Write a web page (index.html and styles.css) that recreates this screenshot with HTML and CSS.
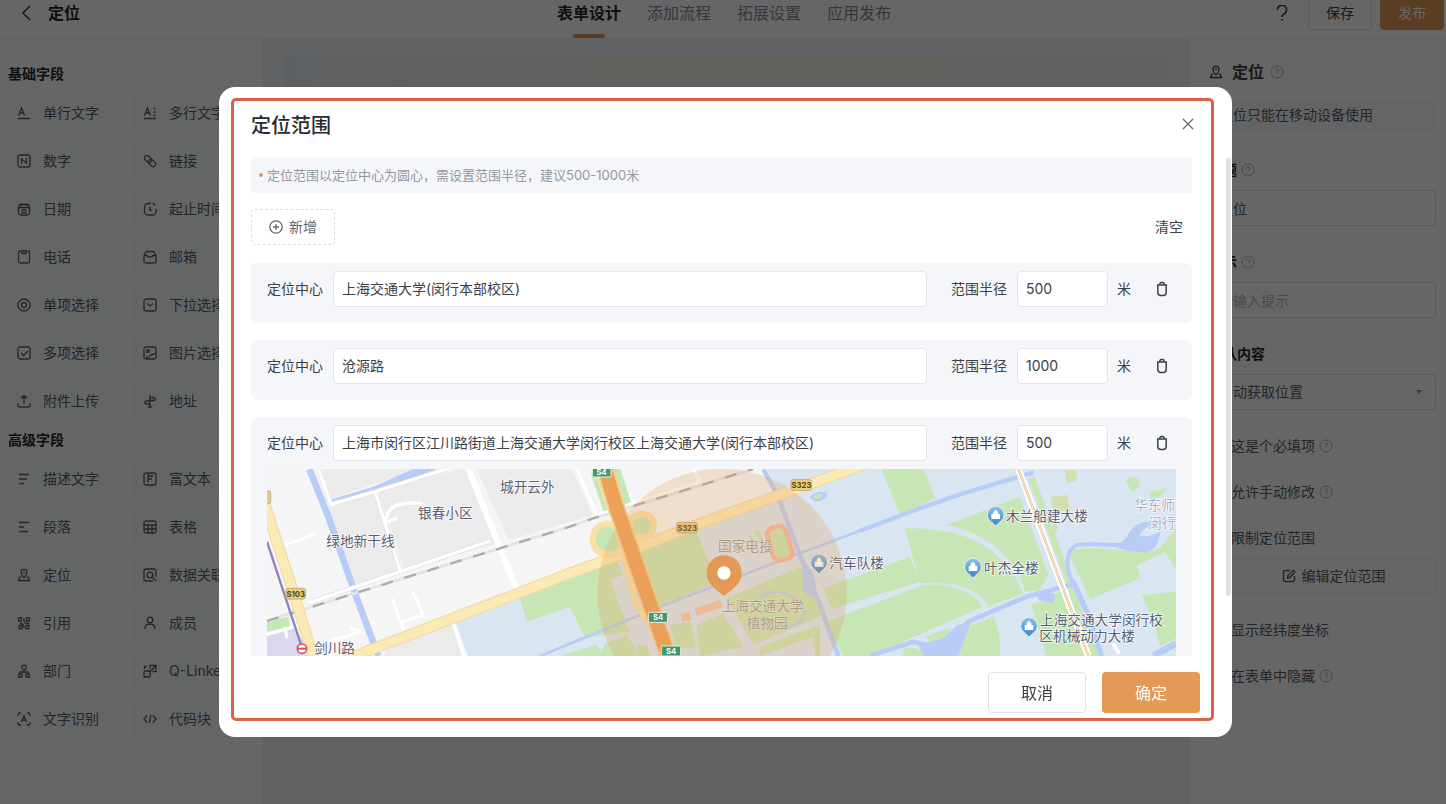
FILE: index.html
```html
<!DOCTYPE html>
<html lang="zh-CN">
<head>
  <meta charset="utf-8">
  <title>表单设计 - 定位</title>
  <meta name="viewport" content="width=device-width, initial-scale=1">
  <link rel="stylesheet" href="styles.css">
</head>
<body>
<!-- shared icons -->
<svg class="icon-defs" aria-hidden="true">
  <symbol id="i-help" viewBox="0 0 14 14"><circle cx="7" cy="7" r="6"/><path d="M5.3 5.6a1.7 1.7 0 1 1 2.5 1.5c-.6.3-.8.6-.8 1.1M7 9.7v.6"/></symbol>
  <symbol id="i-trash" viewBox="0 0 14 16"><path d="M2 4h10M4.500 4l.6-1.700c.2-.5.5-.8 1.100-.8h1.600c.6 0 .9.3 1.100.8L9.500 4M2.800 4v7.500a3 3 0 0 0 3 3h2.400a3 3 0 0 0 3-3V4"/></symbol>
  <symbol id="i-locate" viewBox="0 0 14 14"><path d="M7 9.800C5 8 4 6.300 4 4.300a3 3 0 0 1 6 0C10 6.300 9 8 7 9.800zM7 3.500v2M4.300 8.800H3.200L1.500 12.500h11l-1.700-3.700H9.700"/></symbol>
</svg>

<div class="page">
  <header class="topbar">
    <div class="topbar-left">
      <a href="#" class="back" aria-label="返回"><svg viewBox="0 0 12 16"><path d="M10 1L3 8l7 7"/></svg></a>
      <span class="topbar-title">定位</span>
    </div>
    <nav class="tabs">
      <a href="#" class="tab active">表单设计</a>
      <a href="#" class="tab">添加流程</a>
      <a href="#" class="tab">拓展设置</a>
      <a href="#" class="tab">应用发布</a>
    </nav>
    <div class="topbar-right">
      <button class="help-btn" aria-label="帮助"><svg viewBox="0 0 12 16"><path d="M1.500 4.800a4.500 4.500 0 1 1 6.700 3.900C6.600 9.600 6 10.300 6 12M6 14v1.500"/></svg></button>
      <button class="btn-save">保存</button>
      <button class="btn-publish">发布</button>
    </div>
  </header>

  <div class="workspace">
    <aside class="sidebar">
      <h2 class="group-title">基础字段</h2>
      <div class="field-grid">
        <button class="field-item"><svg viewBox="0 0 14 14"><path d="M1.500 9.500l3-7.500 3 7.500M2.500 7h4M1 12.500h12"/></svg>单行文字</button>
        <button class="field-item"><svg viewBox="0 0 14 14"><path d="M1.500 9.500l3-7.500 3 7.500M2.500 7h4M1 12.500h12M10.500 2.500h2M10.500 6h2M10.500 9.500h2"/></svg>多行文字</button>
        <button class="field-item"><svg viewBox="0 0 14 14"><rect x="1" y="1" width="12" height="12" rx="2"/><path d="M4.500 10V5l5 4V4"/></svg>数字</button>
        <button class="field-item"><svg viewBox="0 0 14 14"><rect x="1" y="2.500" width="8" height="5" rx="2.500" transform="rotate(45 5 5)"/><rect x="5" y="6.500" width="8" height="5" rx="2.500" transform="rotate(45 9 9)"/></svg>链接</button>
        <button class="field-item"><svg viewBox="0 0 14 14"><rect x="1.500" y="2.500" width="11" height="10.500" rx="2.500"/><path d="M4.500 1v3M9.500 1v3M1.500 5.500h11M4.500 8h5M4.500 10.500h5"/></svg>日期</button>
        <button class="field-item"><svg viewBox="0 0 14 14"><path d="M8 1.500H5a3.500 3.500 0 0 0-3.500 3.500v4.500A3.500 3.500 0 0 0 5 13h4.500A3.500 3.500 0 0 0 13 9.500V7M7 4.500V8h2M10 1l2 2.500"/></svg>起止时间</button>
        <button class="field-item"><svg viewBox="0 0 14 14"><rect x="1.500" y="1" width="11" height="12" rx="2"/><path d="M5 1.500v2h4v-2"/></svg>电话</button>
        <button class="field-item"><svg viewBox="0 0 14 14"><path d="M1 5.500l2.500-4h7l2.500 4V11a2 2 0 0 1-2 2H3a2 2 0 0 1-2-2zM1 5.500h3c.5 2 5.500 2 6 0h3"/></svg>邮箱</button>
        <button class="field-item"><svg viewBox="0 0 14 14"><circle cx="7" cy="7" r="6"/><circle cx="7" cy="7" r="2.500"/></svg>单项选择</button>
        <button class="field-item"><svg viewBox="0 0 14 14"><rect x="1" y="1" width="12" height="12" rx="2"/><path d="M4 5.500l3 2.500 3-2.500"/></svg>下拉选择</button>
        <button class="field-item"><svg viewBox="0 0 14 14"><rect x="1" y="1" width="12" height="12" rx="2"/><path d="M4 7l2.500 2.500L11 5"/></svg>多项选择</button>
        <button class="field-item"><svg viewBox="0 0 14 14"><rect x="1" y="1" width="12" height="12" rx="2"/><path d="M4 4h2v2H4zM3 11.500c3 0 5-4 9.500-3.500"/></svg>图片选择</button>
        <button class="field-item"><svg viewBox="0 0 14 14"><path d="M7 10V1.500M4 4.500l3-3 3 3M1 9v2.500c0 .8.500 1.500 1.500 1.500h9c1 0 1.500-.7 1.500-1.500V9"/></svg>附件上传</button>
        <button class="field-item"><svg viewBox="0 0 14 14"><path d="M7 1v12M5 13h4M7 3.500h4l1.500 1.500L11 6.500H7M7 7H3L1.500 8.500 3 10h4z"/></svg>地址</button>
      </div>

      <h2 class="group-title">高级字段</h2>
      <div class="field-grid">
        <button class="field-item"><svg viewBox="0 0 14 14"><path d="M2 2.500h10M2 7h8M2 11.500h5"/></svg>描述文字</button>
        <button class="field-item"><svg viewBox="0 0 14 14"><rect x="1" y="1" width="12" height="12" rx="2"/><path d="M5 10.500V4h5M5 7h4M5 1v3"/></svg>富文本</button>
        <button class="field-item"><svg viewBox="0 0 14 14"><path d="M2 2.500h10M2 7h5M2 11.500h9"/></svg>段落</button>
        <button class="field-item"><svg viewBox="0 0 14 14"><rect x="1" y="1" width="12" height="12" rx="2"/><path d="M1 5h12M1 9h12M5 5v8M9 5v8"/></svg>表格</button>
        <button class="field-item"><svg><use href="#i-locate"/></svg>定位</button>
        <button class="field-item"><svg viewBox="0 0 14 14"><path d="M13 9V3a2 2 0 0 0-2-2H3a2 2 0 0 0-2 2v8c0 1.100.9 2 2 2h7M9 9l4 4"/><circle cx="7" cy="7" r="2.800"/></svg>数据关联</button>
        <button class="field-item"><svg viewBox="0 0 14 14"><path d="M1.500 2h3v3h-3zM2 12.500V9.500h3v3zM7 12c0-4-2-4.500-4-4.500M12.500 2h-3v3h3zM9 9.500h3v3H9zM7 2v3c0 2 2 2.500 5 2.500"/></svg>引用</button>
        <button class="field-item"><svg viewBox="0 0 14 14"><circle cx="7" cy="4" r="2.800"/><path d="M2 13c0-3.500 2-5 5-5s5 1.500 5 5"/></svg>成员</button>
        <button class="field-item"><svg viewBox="0 0 14 14"><circle cx="7" cy="3.500" r="2.300"/><path d="M7 6v2M3 10V8h8v2M1.500 10h3.500v3H1.500zM9 10h3.500v3H9z"/></svg>部门</button>
        <button class="field-item"><svg viewBox="0 0 14 14"><rect x="1" y="7" width="6" height="6" rx="1"/><path d="M7 5V1.500h6v6H9.500M6.500 8l6-6M1.500 5V2.500H4"/></svg>Q-Linker</button>
        <button class="field-item"><svg viewBox="0 0 14 14"><path d="M1 4V2.500C1 1.500 1.500 1 2.500 1H4M10 1h1.500c1 0 1.500.5 1.500 1.500V4M13 10v1.500c0 1-.5 1.500-1.500 1.500H10M4 13H2.500c-1 0-1.500-.5-1.500-1.500V10M4.500 10L7 4l2.500 6M5.300 8.200h3.400"/></svg>文字识别</button>
        <button class="field-item"><svg viewBox="0 0 14 14"><path d="M4 3.500L1 7l3 3.500M10 3.500L13 7l-3 3.500M8 3L6 11"/></svg>代码块</button>
      </div>
    </aside>

    <main class="canvas">
      <div class="canvas-banner"></div>
    </main>

    <aside class="props">
      <div class="props-title"><svg class="ico"><use href="#i-locate"/></svg><strong>定位</strong><svg class="ico-help"><use href="#i-help"/></svg></div>
      <p class="props-notice">定位只能在移动设备使用</p>

      <div class="prop">
        <label for="p-title">标题 <svg class="ico-help"><use href="#i-help"/></svg></label>
        <input id="p-title" type="text" value="定位">
      </div>
      <div class="prop">
        <label for="p-hint">提示 <svg class="ico-help"><use href="#i-help"/></svg></label>
        <input id="p-hint" type="text" placeholder="请输入提示">
      </div>
      <div class="prop prop-select">
        <label for="p-default">默认内容</label>
        <select id="p-default"><option>自动获取位置</option></select>
      </div>

      <label class="check"><input type="checkbox">这是个必填项 <svg class="ico-help"><use href="#i-help"/></svg></label>
      <label class="check"><input type="checkbox">允许手动修改 <svg class="ico-help"><use href="#i-help"/></svg></label>
      <label class="check"><input type="checkbox" checked>限制定位范围</label>
      <button class="btn-edit-range"><svg viewBox="0 0 14 14"><path d="M8 1.500H3.500a2 2 0 0 0-2 2v7c0 1.100.9 2 2 2h7a2 2 0 0 0 2-2V7M5.500 9l.4-2.400L11.300 1.200l1.700 1.700L7.800 8.500z"/></svg>编辑定位范围</button>
      <label class="check"><input type="checkbox">显示经纬度坐标</label>
      <label class="check"><input type="checkbox">在表单中隐藏 <svg class="ico-help"><use href="#i-help"/></svg></label>
    </aside>
  </div>
</div>

<div class="mask">
  <section class="modal" role="dialog" aria-labelledby="modal-title">
    <header class="modal-header">
      <h1 id="modal-title">定位范围</h1>
      <button class="modal-close" aria-label="关闭"><svg viewBox="0 0 12 12"><path d="M1 1l10 10M11 1L1 11"/></svg></button>
    </header>

    <div class="modal-body">
      <p class="hint">定位范围以定位中心为圆心，需设置范围半径，建议500-1000米</p>

      <div class="toolbar">
        <button class="btn-add"><svg viewBox="0 0 14 14"><circle cx="7" cy="7" r="6.200"/><path d="M7 4v6M4 7h6"/></svg>新增</button>
        <button class="btn-clear">清空</button>
      </div>

      <div class="range-card">
        <div class="range-row">
          <label for="c1">定位中心</label>
          <input id="c1" class="center-input" type="text" value="上海交通大学(闵行本部校区)">
          <label for="r1">范围半径</label>
          <input id="r1" class="radius-input" type="text" value="500">
          <span class="unit">米</span>
          <button class="btn-del" aria-label="删除"><svg><use href="#i-trash"/></svg></button>
        </div>
      </div>

      <div class="range-card">
        <div class="range-row">
          <label for="c2">定位中心</label>
          <input id="c2" class="center-input" type="text" value="沧源路">
          <label for="r2">范围半径</label>
          <input id="r2" class="radius-input" type="text" value="1000">
          <span class="unit">米</span>
          <button class="btn-del" aria-label="删除"><svg><use href="#i-trash"/></svg></button>
        </div>
      </div>

      <div class="range-card">
        <div class="range-row">
          <label for="c3">定位中心</label>
          <input id="c3" class="center-input" type="text" value="上海市闵行区江川路街道上海交通大学闵行校区上海交通大学(闵行本部校区)">
          <label for="r3">范围半径</label>
          <input id="r3" class="radius-input" type="text" value="500">
          <span class="unit">米</span>
          <button class="btn-del" aria-label="删除"><svg><use href="#i-trash"/></svg></button>
        </div>

        <svg class="map" viewBox="21 12 2727 561" preserveAspectRatio="xMidYMid slice">
          <defs>
            <linearGradient id="poi-fill" x1="0" y1="0" x2="0" y2="1">
              <stop offset="0" stop-color="#8cc0ea"/>
              <stop offset="1" stop-color="#3f84cc"/>
            </linearGradient>
          </defs>
          <rect x="0" y="0" width="2800" height="600" fill="#f5f5f5"/>
          <!-- city blocks -->
          <g fill="#ebebec">
            <path d="M190 130L340 90L420 315L280 365z"/>
            <path d="M355 82L600 12L625 12L715 235L432 308z"/>
            <path d="M185 12H480L215 100z"/>
            <path d="M650 12H935L1000 150L745 225z"/>
            <path d="M390 525L575 470L610 573H370z"/>
          </g>
          <!-- campus -->
          <path fill="#d9e5f0" d="M580 465L930 328L1280 190L1560 90L1520 12H2748V573H625z"/>
          <path fill="#dcd6ee" d="M0 520L100 485L160 573H0z"/>
          <!-- green areas -->
          <g fill="#c7e6b5">
            <path d="M0 475L85 455L90 485L0 505z"/>
            <path d="M780 400L1070 285L1090 330L1050 345L1110 500L975 518L930 425L800 470z"/>
            <path d="M1130 250L1310 200L1370 350L1200 425z"/>
            <path d="M1040 535L1100 510L1140 573H1010zM1130 540l30 0 10 33h-35z"/>
            <path d="M1400 400L1620 305L1690 450L1480 540zM1310 480L1390 445L1450 545L1330 573H1320z"/>
            <path d="M1230 480l60-10 20 80h-60zM1500 545L1680 480V573H1665L1660 515L1500 573z"/>
            <path d="M900 573L1010 540L1030 573z"/>
            <path d="M1690 370L1950 275L1980 350L1715 432zM1700 470L1990 360C2060 355 2130 370 2168 425L1830 573H1750z"/>
            <path d="M1865 12H1990L2025 100L1920 150zM2060 180L2280 95L2365 330L2340 375L2295 380C2270 290 2200 210 2060 180z"/>
            <path d="M1935 190C2030 190 2100 200 2170 240C2240 290 2265 330 2290 385L2185 425C2160 375 2090 345 1980 355z"/>
            <path d="M2000 515C2030 500 2060 490 2075 492C2070 520 2045 535 2010 530zM1930 552C1960 540 1990 560 2010 573H1930z"/>
            <path d="M2110 490L2200 455C2220 490 2220 530 2220 573H2085z"/>
            <path d="M2315 420L2400 380L2450 395L2520 573H2360zM2305 38L2325 38L2455 400L2435 400z"/>
            <path d="M2425 260C2500 230 2650 280 2700 250L2748 190V310L2715 263L2630 300L2640 340L2490 403z"/>
            <path d="M2645 390L2748 380V520L2700 543L2685 480z"/>
            <path d="M2597 48C2610 30 2640 35 2638 55C2635 75 2620 85 2615 78zM2670 80L2722 70L2700 95L2672 105z"/>
          </g>
          <path fill="#d3dfb0" d="M2415 15h35v30l-20 8h-10zM2372 95l50-5 8 45-50 8zM2375 165l20 20-10 20z"/>
          <!-- water -->
          <g fill="none" stroke="#b8ccf8" stroke-linejoin="round">
            <path stroke-width="20" d="M148 12L205 155L285 385L355 573"/>
            <path stroke-width="14" d="M1510 12L1552 90L1620 270L1680 420L1735 573"/>
            <path stroke-width="8" d="M840 573L1200 425L1620 265L1800 197L1980 130"/>
            <path stroke-width="13" d="M1800 197L1980 130L2100 88L2320 22"/>
            <path stroke-width="14" d="M1830 573L1960 530L2020 545L2090 525L2125 470L2300 395L2440 358"/>
            <path stroke-width="16" d="M2440 350L2480 440L2525 573"/>
            <path stroke-width="12" d="M2440 355C2420 320 2410 260 2450 240C2500 232 2550 245 2600 238"/>
            <path stroke-width="20" d="M2680 573L2748 535"/>
            <path stroke-width="6" d="M1500 400C1540 360 1610 390 1630 430C1650 480 1560 500 1510 490"/>
          </g>
          <g fill="#b8ccf8">
            <path d="M190 110L340 65L460 12H530L370 75L215 108z"/>
            <path d="M1620 285C1660 300 1670 350 1668 395C1640 400 1620 370 1630 340z"/>
            <path d="M1970 530C2050 540 2070 500 2090 480L2135 470C2110 510 2110 573 2080 573H1990z"/>
            <path d="M2330 385L2385 385L2380 415L2335 405z"/>
            <path d="M2570 240C2610 225 2600 185 2650 172L2748 158V172C2690 172 2640 190 2640 212C2660 220 2690 205 2702 198C2695 235 2685 262 2650 262C2610 262 2590 252 2570 250z"/>
            <path d="M1650 95C1670 75 1700 75 1702 90C1695 110 1660 118 1650 95z"/>
          </g>
          <path fill="#c7e6b5" d="M1658 95C1672 84 1688 84 1688 92C1680 103 1664 106 1658 95z"/>
          <!-- minor roads -->
          <g fill="none" stroke="#dedfe2" stroke-width="14" stroke-linejoin="round">
            <path d="M175 12L213 118L345 80L560 12M345 80L420 315M150 412L685 230M625 12L768 370"/>
          </g>
          <g fill="none" stroke="#fff" stroke-width="10" stroke-linejoin="round" stroke-linecap="round">
            <path d="M175 12L213 118L345 80L560 12M345 80L420 315M150 412L685 230"/>
            <path d="M375 175C380 120 420 110 485 115M385 170L408 160M65 243L160 210"/>
            <path d="M398 405L430 495M460 385L490 450L430 470M210 530L300 500L275 490M0 515L120 480M75 490l5 25"/>
            <path d="M580 470L612 573M2562 540L2575 562" stroke-width="12"/>
            <path d="M950 12L1010 150L1120 115L1060 12M1300 12L1320 50L1120 115"/>
            <path d="M625 12L768 370" stroke-width="18"/>
          </g>
          <!-- railway -->
          <path fill="none" stroke="#e3e6e6" stroke-width="9" d="M21 468L300 380L930 185L1000 160L1480 12"/>
          <path fill="none" stroke="#acadad" stroke-width="7" stroke-dasharray="36 36" d="M21 468L300 380L930 185L1000 160L1480 12"/>
          <!-- main roads -->
          <g fill="none" stroke-linejoin="round">
            <path stroke="#f0dca0" stroke-width="34" d="M12 110L90 350L165 590M250 590L330 555L930 325L1100 262L1280 190L1620 68L1830 -8"/>
            <path stroke="#fbeab6" stroke-width="27" d="M12 110L90 350L165 590M250 590L330 555L930 325L1100 262L1280 190L1620 68L1830 -8"/>
            <path stroke="#c7e6b5" stroke-width="88" d="M1034 12L1072 125"/>
            <path stroke="#f8e1a6" stroke-width="16" d="M1008 12L1060 160L1130 420L1200 530"/>
            <path fill="#c7e6b5" stroke="#f8e1a6" stroke-width="20" d="M1085 255C1030 290 990 250 1000 210C1010 170 1060 165 1080 200zM1110 165C1140 130 1190 150 1180 190C1170 225 1130 225 1110 200z"/>
            <path stroke="#f5cf92" stroke-width="52" d="M1035 12L1070 130L1140 330L1225 573"/>
            <path stroke="#eda25a" stroke-width="42" d="M1035 12L1070 130L1140 330L1225 573"/>
            <path stroke="#fff" stroke-width="20" d="M2275 12L2485 573"/>
            <path stroke="#e6c795" stroke-width="8" d="M2275 12L2485 573"/>
            <path stroke="#fff" stroke-width="2" d="M2275 12L2485 573"/>
            <path stroke="#8d84c0" stroke-width="7" d="M21 230L125 545"/>
          </g>
          <!-- sports field -->
          <path fill="#c7e6b5" stroke="#f3b9a3" stroke-width="14" stroke-linejoin="round" d="M1520 205L1535 188L1565 182L1578 198L1598 262L1590 280L1555 288L1540 275z"/>
          <path fill="#f0c3ae" d="M1305 430L1380 405L1390 425L1310 452zM1262 448l25-8 6 25-25 6z"/>
          <path fill="#c7e6b5" d="M1465 215l10-8 15 30-10 6zM1482 198l14-6 14 32-12 8z"/>

          <g class="road-no">
            <rect x="78" y="370" width="58" height="32" rx="6"/><text x="107" y="395">S103</text>
            <rect x="1250" y="172" width="62" height="32" rx="6"/><text x="1281" y="197">S323</text>
            <rect x="1593" y="44" width="62" height="32" rx="6"/><text x="1624" y="69">S323</text>
            <rect x="-10" y="78" width="42" height="38" rx="6"/>
          </g>

          <g class="map-text">
            <text x="720" y="81">城开云外</text>
            <text x="474" y="160">银春小区</text>
            <text x="199" y="243">绿地新干线</text>
            <text x="162" y="565">剑川路</text>
            <text x="1708" y="310">汽车队楼</text>
            <text x="2238" y="169">木兰船建大楼</text>
            <text x="2172" y="324">叶杰全楼</text>
            <text x="2340" y="479">上海交通大学闵行校</text>
            <text x="2338" y="527">区机械动力大楼</text>
          </g>
          <g class="map-text map-text-faint">
            <text x="2622" y="134">华东师</text>
            <text x="2664" y="188">闵行</text>
          </g>
          <g class="map-text map-text-area">
            <text x="1374" y="259">国家电投</text>
            <text x="1385" y="439">上海交通大学</text>
            <text x="1460" y="490">植物园</text>
          </g>
          <circle cx="126" cy="551" r="14" fill="#fff" stroke="#d8505c" stroke-width="5"/>
          <path d="M112 551h28" stroke="#d8505c" stroke-width="6"/>

          <!-- building markers -->
          <g id="poi" transform="translate(1677 296)"><path fill="url(#poi-fill)" stroke="#fff" stroke-width="2" d="M0 30C-10 18-25 12-25-4a25 25 0 0 1 50 0C25 12 10 18 0 30z"/><path fill="#fff" d="M-13 9V-6h6v-6L0-19l7 7v6h6V9z"/></g>
          <use href="#poi" x="530" y="-143"/>
          <use href="#poi" x="462" y="13"/>
          <use href="#poi" x="630" y="190"/>

          <!-- selected radius -->
          <circle cx="1386" cy="385" r="374" fill="#e39a57" fill-opacity=".25"/>
          <g class="road-no road-no-green">
            <rect x="997" y="8" width="56" height="28" rx="4"/><text x="1025" y="31">S4</text>
            <rect x="1165" y="442" width="58" height="30" rx="4"/><text x="1194" y="466">S4</text>
            <rect x="1204" y="543" width="58" height="30" rx="4"/><text x="1233" y="567">S4</text>
          </g>
          <path fill="#e39a57" d="M1392 393C1372 375 1340 360 1340 323a52 52 0 0 1 105 0C1445 360 1412 375 1392 393z"/>
          <circle cx="1392" cy="324" r="20" fill="#fff"/>
        </svg>
      </div>
    </div>

    <footer class="modal-footer">
      <button class="btn-cancel">取消</button>
      <button class="btn-ok">确定</button>
    </footer>
    <div class="scroll-thumb"></div>
    <div class="highlight"></div>
  </section>
</div>
</body>
</html>
```
FILE: styles.css
```css
* {
  box-sizing: border-box;
}

body {
  margin: 0;
  height: 100vh;
  overflow: hidden;
  font-family: Inter, "Noto Sans CJK SC", sans-serif;
  font-size: 14px;
  line-height: 20px;
  color: #3c4046;
  background: #fff;
}

h1, h2, p {
  margin: 0;
}

a {
  color: inherit;
  text-decoration: none;
}

button, input, select {
  font: inherit;
  color: inherit;
}

button {
  padding: 0;
  border: none;
  background: none;
  cursor: pointer;
}

svg {
  fill: none;
  stroke: currentColor;
  flex: none;
}

.icon-defs {
  position: absolute;
  width: 0;
  height: 0;
}

/* the page is scrolled a little under the dialog */
.page {
  display: flex;
  flex-direction: column;
  margin-top: -13px;
  height: calc(100vh + 13px);
}

/* Top bar */
.topbar {
  display: grid;
  grid-template-columns: 1fr auto 1fr;
  align-items: center;
  height: 52px;
  padding: 0 2px 0 4px;
  border-bottom: 1px solid #eceef1;
  font-size: 16px;
}

.topbar-left {
  display: flex;
  align-items: center;
  gap: 16px;
  padding-left: 16px;
}

.back svg {
  display: block;
  width: 12px;
  height: 16px;
  stroke-width: 1.5;
}

.topbar-title {
  font-weight: 700;
  color: #26292e;
}

.tabs {
  display: flex;
  align-self: stretch;
  gap: 26px;
}

.tab {
  position: relative;
  display: flex;
  align-items: center;
  color: #868b93;
}

.tab.active {
  color: #26292e;
  font-weight: 700;
}

.tab.active::after {
  content: "";
  position: absolute;
  left: 25%;
  right: 25%;
  bottom: 0;
  height: 4px;
  border-radius: 2px;
  background: #e39a57;
}

.topbar-right {
  display: flex;
  justify-content: flex-end;
  align-items: center;
  gap: 8px;
  font-size: 14px;
}

.help-btn {
  margin-right: 12px;
}

.help-btn svg {
  display: block;
  width: 12px;
  height: 16px;
  stroke-width: 1.6;
}

.btn-save, .btn-publish {
  width: 64px;
  height: 34px;
  border-radius: 4px;
}

.btn-save {
  border: 1px solid #dfe1e6;
}

.btn-publish {
  background: #e39a57;
  color: #fff;
}

.workspace {
  display: flex;
  flex: 1;
  min-height: 0;
}

/* Field library */
.sidebar {
  flex: none;
  width: 264px;
  padding: 25px 11px 0 8px;
  border-right: 1px solid #eef0f3;
}

.group-title {
  margin-bottom: 11px;
  font-size: 14px;
  font-weight: 700;
  color: #26292e;
}

.field-grid {
  display: grid;
  grid-template-columns: 1fr 1fr;
  gap: 12px 8px;
  margin-bottom: 11px;
}

.field-item {
  display: flex;
  align-items: center;
  gap: 12px;
  height: 36px;
  padding-left: 8px;
  border: 1px solid #f4f5f7;
  border-radius: 4px;
  background: #fbfcfd;
  color: #5a5f67;
  white-space: nowrap;
}

.field-item svg {
  width: 14px;
  height: 14px;
  stroke-width: 1.3;
}

/* Canvas */
.canvas {
  flex: 1;
  padding: 17px 20px;
  background: #f2f4f8;
}

.canvas-banner {
  height: 120px;
  border-radius: 6px;
  background: linear-gradient(90deg, #e9f0f6, #f4f1e8 40%, #f4f1e8 70%, #ebf0f4);
}

/* Field properties */
.props {
  display: flex;
  flex-direction: column;
  flex: none;
  width: 258px;
  padding: 21px 10px 0 20px;
  border-left: 1px solid #eef0f3;
  color: #5a5f67;
}

.props-title {
  display: flex;
  align-items: center;
  gap: 6px;
  height: 24px;
  font-size: 16px;
  color: #3c4046;
}

.props-title .ico {
  width: 14px;
  height: 14px;
  margin-right: 3px;
  stroke-width: 1.3;
}

.ico-help {
  width: 14px;
  height: 14px;
  stroke: #adb0b6;
}

.props-notice {
  margin-top: 15px;
  padding: 6px 10px;
  border-radius: 4px;
  background: #fafbfc;
}

.prop {
  display: flex;
  flex-direction: column;
  gap: 10px;
  margin-top: 26px;
}

.props-notice + .prop {
  margin-top: 29px;
}

.prop label {
  display: flex;
  align-items: center;
  gap: 4px;
  font-weight: 700;
  color: #26292e;
}

.prop input, .prop select {
  width: 100%;
  height: 36px;
  padding: 0 9px;
  border: 1px solid #d9dce1;
  border-radius: 4px;
  background: #fff;
  appearance: none;
}

.prop input::placeholder {
  color: #b8bbc1;
}

.prop-select {
  position: relative;
}

.prop-select::after {
  content: "";
  position: absolute;
  right: 14px;
  bottom: 16px;
  border: 3px solid transparent;
  border-top: 4px solid #8b8f96;
  border-bottom: none;
}

.check {
  display: flex;
  align-items: center;
  gap: 4px;
  margin-top: 26px;
}

.check input {
  width: 14px;
  height: 14px;
  margin: 0 4px 0 0;
}

.btn-edit-range {
  display: flex;
  align-items: center;
  justify-content: center;
  gap: 6px;
  height: 36px;
  margin-top: 10px;
  padding-left: 22px;
  border: 1px dashed #e0e3e8;
  border-radius: 4px;
}

.btn-edit-range svg {
  width: 14px;
  height: 14px;
  stroke-width: 1.4;
}

/* Dialog */
.mask {
  position: fixed;
  inset: 0;
  display: flex;
  padding: 87px 214px 67px 219px;
  background: rgba(0, 0, 0, 0.6);
}

.modal {
  position: relative;
  display: flex;
  flex-direction: column;
  flex: 1;
  min-width: 0;
  border-radius: 16px;
  background: #fff;
}

.modal-header {
  display: flex;
  justify-content: space-between;
  align-items: center;
  height: 70px;
  padding: 8px 38px 0 32px;
}

.modal-header h1 {
  font-size: 20px;
  font-weight: 500;
  line-height: 28px;
  color: #26292e;
}

.modal-close {
  padding-bottom: 4px;
}

.modal-close svg {
  display: block;
  width: 12px;
  height: 12px;
  stroke: #6d7075;
  stroke-width: 1.4;
}

.modal-body {
  flex: 1;
  min-height: 0;
  overflow: hidden;
  padding: 0 40px 0 32px;
}

.hint {
  display: flex;
  align-items: center;
  height: 36px;
  padding-left: 8px;
  border-radius: 4px;
  background: #f4f6fa;
  color: #9498a0;
  font-size: 13px;
}

.hint::before {
  content: "";
  width: 4px;
  height: 4px;
  margin-right: 4px;
  border-radius: 50%;
  background: #e39a57;
}

.toolbar {
  display: flex;
  justify-content: space-between;
  align-items: center;
  margin: 16px 0 18px;
  padding-right: 9px;
}

.btn-add {
  display: flex;
  align-items: center;
  gap: 6px;
  height: 36px;
  padding: 0 17px;
  border: 1px dashed #dcdfe4;
  border-radius: 4px;
  color: #63666c;
}

.btn-add svg {
  width: 14px;
  height: 14px;
  stroke-width: 1.3;
}

.range-card {
  margin-bottom: 17px;
  padding: 8px 16px 16px;
  border-radius: 6px;
  background: #f4f6fa;
}

.range-row {
  display: flex;
  align-items: center;
}

.range-row label {
  flex: none;
  margin-right: 10px;
}

.range-row input {
  height: 36px;
  padding: 0 8px 2px;
  border: 1px solid #e2e5e9;
  border-radius: 4px;
  background: #fff;
}

.center-input {
  flex: 1;
  min-width: 0;
  margin-right: 24px;
}

.radius-input {
  width: 91px;
}

.unit {
  margin: 0 24px 0 9px;
}

.btn-del {
  margin-right: 7px;
}

.btn-del svg {
  display: block;
  width: 14px;
  height: 16px;
  stroke-width: 1.5;
}

/* Map */
.map {
  display: block;
  width: 100%;
  height: 187px;
  margin-top: 8px;
  stroke: none;
}

.map-text {
  font-size: 41px;
  fill: #5a5f74;
  stroke: rgba(255, 255, 255, 0.8);
  stroke-width: 5px;
  paint-order: stroke;
}

.map-text-faint {
  fill: #a9b0c8;
}

.map-text-area {
  fill: #9a9c94;
  stroke-width: 2px;
}

.road-no {
  font-size: 23px;
  font-weight: 700;
  text-anchor: middle;
}

.road-no rect {
  fill: #f3cf6b;
  stroke: #b5ab98;
  stroke-width: 3px;
}

.road-no text {
  fill: #4a4230;
}

.road-no-green rect {
  fill: #43986a;
  stroke: #e9f0e4;
}

.road-no-green text {
  fill: #fff;
}

.modal-footer {
  display: flex;
  justify-content: flex-end;
  gap: 16px;
  padding: 16px 32px 24px;
  font-size: 16px;
}

.btn-cancel, .btn-ok {
  width: 98px;
  height: 41px;
  border-radius: 4px;
}

.btn-cancel {
  border: 1px solid #dfe2e7;
}

.btn-ok {
  background: #e39a57;
  color: #fff;
}

.scroll-thumb {
  position: absolute;
  top: 71px;
  right: 1px;
  bottom: 141px;
  width: 5px;
  border-radius: 3px;
  background: #dfe1e2;
}

.highlight {
  position: absolute;
  inset: 11px 18px 16px 12px;
  border: 3px solid #dc5f4c;
  border-radius: 5px;
  pointer-events: none;
}
```
